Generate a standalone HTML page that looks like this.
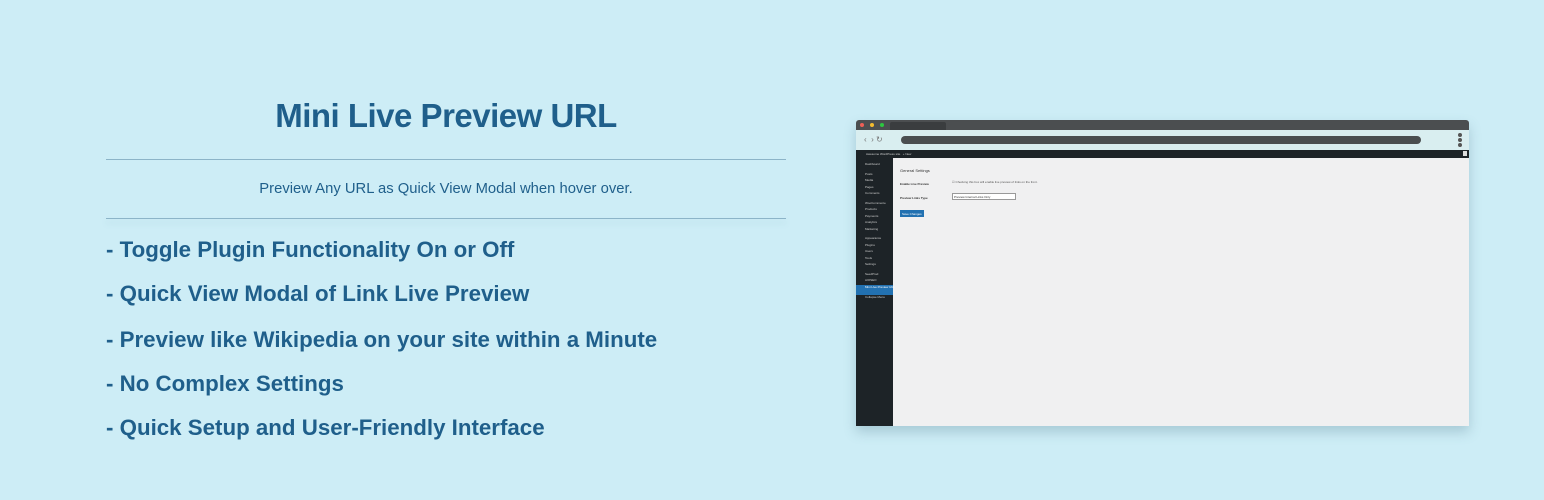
<!DOCTYPE html>
<html><head><style>
*{margin:0;padding:0;box-sizing:border-box}
body{width:1544px;height:500px;background:#cdedf6;font-family:"Liberation Sans",sans-serif;color:#1f5f8b;position:relative;overflow:hidden}
.a{position:absolute}
h1{position:absolute;left:106px;width:680px;top:97px;text-align:center;font-size:33px;font-weight:bold;letter-spacing:-0.5px}
.hr{position:absolute;left:106px;width:680px;height:1px;background:#8cb4c8}
.sub{position:absolute;left:106px;width:680px;top:181px;text-align:center;font-size:14.8px}
.f{position:absolute;left:106px;font-size:22.3px;font-weight:bold}
.sb div{font-size:3px;color:#ccc;height:6.5px;padding-left:9px;white-space:nowrap}
</style></head><body>
<h1>Mini Live Preview URL</h1>
<div class="hr" style="top:159px"></div>
<div class="sub">Preview Any URL as Quick View Modal when hover over.</div>
<div class="hr" style="top:218px;box-shadow:0 4px 6px rgba(120,160,180,.3)"></div>
<div class="f" style="top:237px">- Toggle Plugin Functionality On or Off</div>
<div class="f" style="top:281px">- Quick View Modal of Link Live Preview</div>
<div class="f" style="top:327px">- Preview like Wikipedia on your site within a Minute</div>
<div class="f" style="top:371px">- No Complex Settings</div>
<div class="f" style="top:415px">- Quick Setup and User-Friendly Interface</div>

<div class="a" style="left:856px;top:120px;width:613px;height:306px;background:#f0f0f1;box-shadow:0 6px 12px rgba(80,120,140,.3);border-radius:3px 3px 0 0;overflow:hidden">
 <div class="a" style="left:0;top:0;width:613px;height:10px;background:#4b4e50"></div>
 <div class="a" style="left:4px;top:3px;width:4px;height:4px;border-radius:50%;background:#ee5f57"></div>
 <div class="a" style="left:14px;top:3px;width:4px;height:4px;border-radius:50%;background:#f4bc2f"></div>
 <div class="a" style="left:24px;top:3px;width:4px;height:4px;border-radius:50%;background:#2cc840"></div>
 <div class="a" style="left:34px;top:2px;width:56px;height:8px;background:#3a3d3f;border-radius:2px 2px 0 0"></div>
 <div class="a" style="left:0;top:10px;width:613px;height:20px;background:#d9eef0"></div>
 <div class="a" style="left:8px;top:15px;font-size:8px;color:#777">‹ &nbsp;› ↻</div>
 <div class="a" style="left:45px;top:16px;width:520px;height:8px;background:#4a4e50;border-radius:4px"></div>
 <div class="a" style="left:602px;top:13px;width:4px;height:4px;border-radius:50%;background:#555"></div>
 <div class="a" style="left:602px;top:18px;width:4px;height:4px;border-radius:50%;background:#555"></div>
 <div class="a" style="left:602px;top:23px;width:4px;height:4px;border-radius:50%;background:#555"></div>
 <div class="a" style="left:0;top:30px;width:613px;height:8px;background:#1d2327;font-size:3px;color:#ccc;padding:2px 0 0 10px">Awesome WordPress site &nbsp; + New</div>
 <div class="a" style="left:607px;top:31px;width:4px;height:5px;background:#ddd"></div>
 <div class="a sb" style="left:0;top:38px;width:37px;height:268px;background:#1d2327;padding-top:4px">
  <div>Dashboard</div><div style="height:3px"></div><div>Posts</div><div>Media</div><div>Pages</div><div>Comments</div><div style="height:3px"></div><div>WooCommerce</div><div>Products</div><div>Payments</div><div>Analytics</div><div>Marketing</div><div style="height:3px"></div><div>Appearance</div><div>Plugins</div><div>Users</div><div>Tools</div><div>Settings</div><div style="height:3px"></div><div>SeedProd</div><div>AIOSEO</div>
  <div style="background:#2271b1;color:#fff;height:10px">Mini Live Preview URL</div><div>Collapse Menu</div>
 </div>
 <div class="a" style="left:44px;top:48px;font-size:4px;color:#333">General Settings</div>
 <div class="a" style="left:44px;top:62px;font-size:3px;color:#333;font-weight:bold">Enable Live Preview</div>
 <div class="a" style="left:96px;top:60px;font-size:3px;color:#555">☑ Checking this box will enable live preview of links on the front.</div>
 <div class="a" style="left:44px;top:76px;font-size:3px;color:#333;font-weight:bold">Preview Links Type</div>
 <div class="a" style="left:96px;top:73px;width:64px;height:7px;background:#fff;border:1px solid #999;font-size:3px;color:#333;padding:1px">Preview Internal Links Only</div>
 <div class="a" style="left:44px;top:90px;width:24px;height:7px;background:#2271b1;font-size:3px;color:#fff;padding:2px">Save Changes</div>
</div>
</body></html>
